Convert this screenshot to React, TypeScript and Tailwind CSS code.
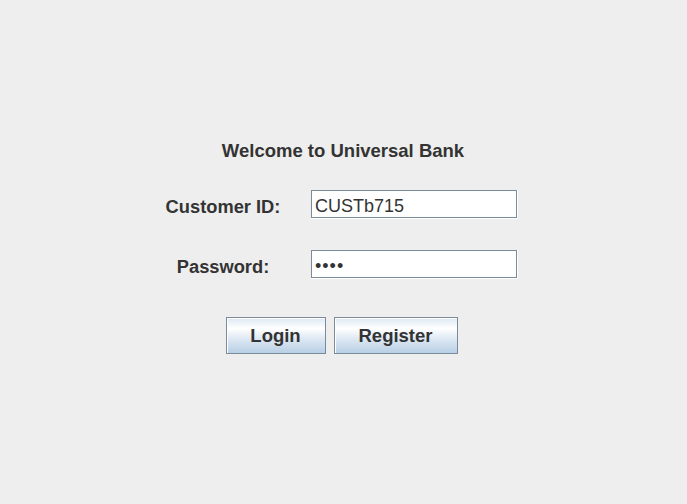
import React, { useState } from 'react';

const font = { fontFamily: '"Liberation Sans", Arial, sans-serif' };

const Field: React.FC<{ value: string; secret?: boolean }> = ({ value, secret }) => (
  // Metal style: dark frame with a white etch on the bottom/right
  <div className="w-[207px] h-[29px] border-r border-b border-white">
    <div
      className={`h-full w-full border border-[#7a8a99] bg-white pl-[3px] pt-[3px] flex items-center text-[18px] text-[#333333] leading-[20px] ${secret ? 'tracking-[1px]' : ''}`}
    >
      {secret ? '\u2022'.repeat(value.length) : value}
    </div>
  </div>
);

const MetalButton: React.FC<{ label: string; width: string }> = ({ label, width }) => (
  <button
    className={`${width} h-[37px] border border-[#7a8a99] flex items-center justify-center pt-[1px] text-[18.5px] font-bold text-[#333333] leading-[20px] bg-[linear-gradient(to_bottom,#dde8f3_0%,#ffffff_30%,#dde8f3_60%,#b8cfe5_100%)] shadow-[inset_1px_1px_0_#ffffff]`}
  >
    {label}
  </button>
);

export default function App() {
  const [customerId] = useState('CUSTb715');
  const [password] = useState('abcd');

  return (
    <div className="w-full min-h-screen bg-[#eeeeee] flex flex-col items-center pt-[141px]" style={font}>
      <h1 className="text-[18.5px] font-bold text-[#333333] leading-[20px] mr-[1px]">Welcome to Universal Bank</h1>

      <div className="w-full pl-[158px] mt-[29px] flex flex-col gap-[31px]">
        <div className="flex items-center">
          <div className="w-[130px] text-center text-[18.3px] font-bold text-[#333333] leading-[20px] pt-[4px]">Customer ID:</div>
          <div className="ml-[23px]">
            <Field value={customerId} />
          </div>
        </div>
        <div className="flex items-center">
          <div className="w-[130px] text-center text-[18.3px] font-bold text-[#333333] leading-[20px] pt-[4px]">Password:</div>
          <div className="ml-[23px]">
            <Field value={password} secret />
          </div>
        </div>
      </div>

      <div className="mt-[38px] flex gap-[8px] mr-[4px]">
        <MetalButton label="Login" width="w-[100px]" />
        <MetalButton label="Register" width="w-[124px]" />
      </div>
    </div>
  );
}
